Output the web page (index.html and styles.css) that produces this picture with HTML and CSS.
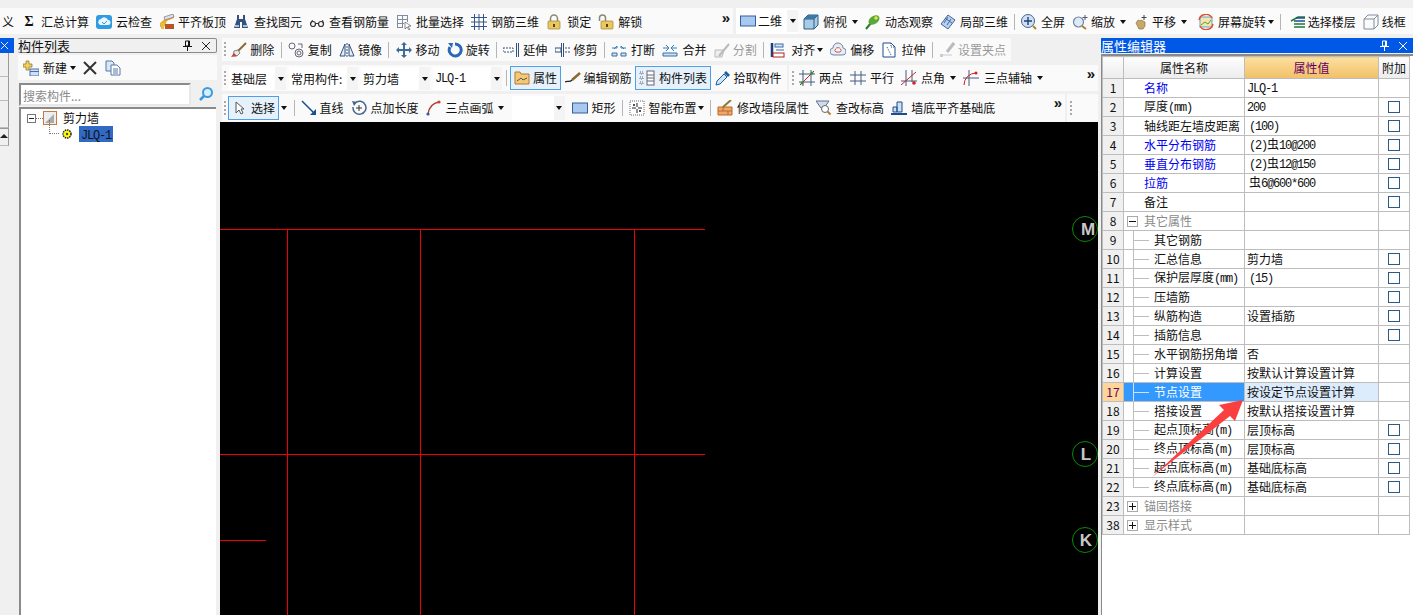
FILE: index.html
```html
<!DOCTYPE html>
<html lang="zh-CN">
<head>
  <meta charset="UTF-8">
  <title>属性编辑器</title>
  <link rel="stylesheet" href="styles.css">
</head>
<body>
  <div class="topbar">
    <div class="tb top-a">
      <span class="cut">义</span>
      <span class="it"><span class="sigma">Σ</span>汇总计算</span>
      <span class="it"><svg viewBox="0 0 16 16"><rect x="0" y="1" width="16" height="14" rx="3" fill="#2f9be0"/><path d="M3 10a3 3 0 0 1 2-5 4 4 0 0 1 7 1 2.500 2.500 0 0 1 0 5H4z" fill="#e8f5ff"/><path d="M6 8l2 2 3-3" stroke="#2f9be0" fill="none"/></svg>云检查</span>
      <span class="it g3"><svg viewBox="0 0 16 16"><path d="M1 9l6-5 8-3v3l-7 3-3 6H1z" fill="#e8b030"/><path d="M5 3l9-3 1 3-9 3z" fill="#dde" stroke="#667" stroke-width=".6"/><rect x="6" y="10" width="9" height="5" fill="#b5562a"/><path d="M2 15V9h3v6z" fill="#e8c040"/></svg>平齐板顶</span>
      <span class="it g5"><svg viewBox="0 0 16 16"><path d="M4 1h2v4h4V1h2v4l3 9H9V8H7v6H1l3-9z" fill="#33507f"/><path d="M2 11h4v2H2zM10 11h4v2h-4z" fill="#a8c0e0"/></svg>查找图元</span>
      <span class="it"><svg viewBox="0 0 16 16"><circle cx="4" cy="10" r="2.500" fill="none" stroke="#333" stroke-width="1.200"/><circle cx="12" cy="10" r="2.500" fill="none" stroke="#333" stroke-width="1.200"/><path d="M6.500 9.500h3M1.500 10l2-4M14.500 10l-1-4" stroke="#333" fill="none"/></svg>查看钢筋量</span>
      <span class="it"><svg viewBox="0 0 16 16"><path d="M1 1.500h11M1 5.500h11M1 9.500h7M1 13.500h6M1.500 1v13M6.500 1v13M11.500 1v7" stroke="#7d8ca0" fill="none"/><path d="M9 8l6 4-3 .5 2 3-1 .5-2-3-2 2z" fill="#fff" stroke="#444" stroke-width=".6"/></svg>批量选择</span>
      <span class="it"><svg viewBox="0 0 16 16"><path d="M0 3.500h16M0 8h16M0 12.500h16M3.500 0v16M8 0v16M12.500 0v16" stroke="#34568c" fill="none"/></svg>钢筋三维</span>
      <span class="it g5"><svg viewBox="0 0 16 16"><path d="M4.500 8V4.500a3.500 3.500 0 0 1 7 0V8" fill="none" stroke="#8a8a70" stroke-width="1.500"/><rect x="2" y="7" width="12" height="8" rx="1" fill="#e8c860" stroke="#a08030" stroke-width=".7"/><rect x="7" y="10" width="2" height="3" fill="#604010"/></svg>锁定</span>
      <span class="it"><svg viewBox="0 0 16 16"><path d="M1.500 7V4a3 3 0 0 1 6 0v3" fill="none" stroke="#8a8a70" stroke-width="1.500"/><rect x="3" y="7" width="12" height="8" rx="1" fill="#e8c860" stroke="#a08030" stroke-width=".7"/><rect x="8" y="10" width="2" height="3" fill="#604010"/></svg>解锁</span>
      <span class="more">»</span>
    </div>
    <div class="tb top-b">
      <span class="combo-btn"><span class="it g2"><svg viewBox="0 0 16 16"><rect x=".5" y="3" width="15" height="10" fill="#a9c8f0" stroke="#3060a0"/></svg>二维</span><span class="arr-box"><i class="arr"></i></span></span>
      <span class="it"><svg viewBox="0 0 16 16"><path d="M1 5l4-4h10v10l-4 4H1z" fill="#a8cce8" stroke="#2c5a80"/><path d="M1 5h10v10M11 5l4-4" stroke="#2c5a80" fill="none"/><path d="M1 5l4-4h10l-4 4z" fill="#3a78a8"/></svg>俯视</span><i class="arr arr-f"></i>
      <span class="it"><svg viewBox="0 0 16 16"><path d="M1 15L6 9" stroke="#2a7a2a" stroke-width="2"/><ellipse cx="9" cy="6" rx="6" ry="4" transform="rotate(-35 9 6)" fill="#5aa838"/><circle cx="11" cy="4" r="1.800" fill="#d8e850"/></svg>动态观察</span>
      <span class="it"><svg viewBox="0 0 16 16"><path d="M8 1l7 5-7 9-7-5z" fill="#b8d0ee" stroke="#406a9c"/><path d="M5 4l7 5M8 3L4 9M11 5l-4 6" stroke="#406a9c" fill="none"/></svg>局部三维</span>
      <i class="sep"></i>
      <span class="it"><svg viewBox="0 0 16 16"><circle cx="7" cy="7" r="6.500" fill="#cfe0f2" stroke="#44678f"/><path d="M7 3v8M3 7h8" stroke="#1c3f7a" stroke-width="1.400"/><path d="M12 12l3 3" stroke="#b08030" stroke-width="2"/></svg>全屏</span>
      <span class="it g3"><svg viewBox="0 0 16 16"><circle cx="6.500" cy="8" r="5" fill="#dfeaf6" stroke="#6d87a5" stroke-width="1.200"/><path d="M10 12l4 3" stroke="#b08030" stroke-width="2"/><path d="M13 1v5M10.500 3.500h5" stroke="#557" /></svg>缩放</span><i class="arr arr-f"></i>
      <span class="it g3"><svg viewBox="0 0 16 16"><path d="M3 9l2-3 2 1 1-1 2 1 2 1v4l-2 3H6z" fill="#c9a968" stroke="#7d6230" stroke-width=".6"/><path d="M11 1v5M8.500 3.500h5" stroke="#444"/></svg>平移</span><i class="arr arr-f"></i>
      <span class="it push4"><svg viewBox="0 0 16 16"><rect x="2" y="3" width="12" height="10" fill="#f2e6a8" stroke="#6aa0cc"/><path d="M3 11l4-3 3 2 3-4" stroke="#50a050" fill="none"/><path d="M1 6a7 7 0 0 1 13-2M15 10a7 7 0 0 1-13 2" stroke="#e04a30" stroke-width="1.400" fill="none"/></svg>屏幕旋转</span><i class="arr arr-n"></i>
      <i class="sep"></i>
      <span class="it g2 push3"><svg viewBox="0 0 16 16"><path d="M1 7l7-4h7M4 10h11M4 13h11" stroke="#1f7a3c" stroke-width="1.600" fill="none"/><path d="M6 4h9M4 7h11" stroke="#1d4d8e" stroke-width="1.400"/></svg>选择楼层</span>
      <span class="it g3"><svg viewBox="0 0 16 16"><path d="M1 5l4-4h10v10l-4 4H1zM1 5h10v10M11 5l4-4" stroke="#7d8ea0" fill="none"/></svg>线框</span>
    </div>
  </div>

  <div class="main">
    <div class="strip">
      <div class="strip-title"><svg viewBox="0 0 10 10"><path d="M1 1l8 8M9 1L1 9" stroke="#fff"/></svg></div>
      <div class="strip-cell"></div>
      <div class="strip-cell"></div>
      <div class="strip-cell tall"></div>
      <div class="strip-cell up"><i></i></div>
    </div>

    <div class="list">
      <div class="pane-title">
        <span>构件列表</span>
        <svg class="pin" viewBox="0 0 9 11"><path d="M2.500 1h4v5h-4zM0 6.500h9M4.500 7v4" fill="none" stroke="#111"/><path d="M5 1h1.500v5H5z" fill="#111"/></svg>
        <svg class="close" viewBox="0 0 10 10"><path d="M1 1l8 8M9 1L1 9" stroke="#222"/></svg>
      </div>
      <div class="list-tools">
        <span class="it"><svg viewBox="0 0 16 16"><path d="M3 1h3v3h3v3H6v3H3V7H0V4h3z" fill="#f0d060" stroke="#8a7020" stroke-width=".7"/><rect x="7" y="9" width="9" height="7" fill="#cfe0f4" stroke="#4a70a8"/><path d="M7 11.500h9" stroke="#4a70a8"/></svg>新建</span><i class="arr arr-n"></i>
        <svg class="tool-x" viewBox="0 0 14 14"><path d="M1 1l12 12M13 1L1 13" stroke="#333" stroke-width="2"/></svg>
        <svg class="tool-copy" viewBox="0 0 16 16"><path d="M1 1h6l2 2v8H1z" fill="#d8e6f6" stroke="#5578a8"/><path d="M6 5h6l3 3v7H6z" fill="#fff" stroke="#5578a8"/><path d="M8 9h5M8 11h5M8 13h5" stroke="#5578a8"/></svg>
      </div>
      <div class="search">
        <div class="search-input">搜索构件...</div>
        <svg viewBox="0 0 16 16"><circle cx="9.500" cy="6.500" r="4.500" fill="#d8eefc" stroke="#3b9be0" stroke-width="2"/><path d="M6 10l-4 4" stroke="#3b9be0" stroke-width="2.500"/></svg>
      </div>
      <div class="tree">
        <div class="node">
          <span class="expander"></span><i class="dots"></i>
          <svg viewBox="0 0 14 14"><rect x=".5" y=".5" width="13" height="13" fill="#eee" stroke="#c87a40"/><path d="M2 12l9-9v9z" fill="#aaa"/></svg>
          <span>剪力墙</span>
        </div>
        <div class="node child">
          <i class="elbow"></i>
          <svg viewBox="0 0 10 10"><circle cx="5" cy="5" r="4" fill="#ff0" stroke="#222" stroke-dasharray="1.500 .8" stroke-width="1.500"/><circle cx="5" cy="5" r="1.200" fill="#444"/></svg>
          <span class="picked"><span class="en">JLQ-1</span></span>
        </div>
      </div>
    </div>

    <div class="center">
      <div class="tb row1">
        <i class="grip"></i>
        <span class="it g3"><svg viewBox="0 0 16 16"><path d="M15 1L7 9" stroke="#8a6a30" stroke-width="2"/><path d="M2 14l1-5 4-1 2 3-3 3z" fill="#e8e8e8" stroke="#555" stroke-width=".7"/><path d="M0 15l6-1-3-3z" fill="#d04040"/></svg>删除</span>
        <i class="sep"></i>
        <span class="it"><svg viewBox="0 0 16 16"><circle cx="4" cy="4" r="3" fill="none" stroke="#667"/><circle cx="11" cy="11" r="4" fill="none" stroke="#667"/><circle cx="11" cy="11" r="2" fill="none" stroke="#667"/><path d="M10 2l4 0 0 4" stroke="#667" fill="none"/></svg>复制</span>
        <span class="it g3"><svg viewBox="0 0 16 16"><path d="M6 2L1 14h5zM10 2l5 12h-5z" fill="#e4edf7" stroke="#31507f"/><path d="M8 1v14" stroke="#31507f" stroke-dasharray="2 1"/></svg>镜像</span>
        <i class="sep"></i>
        <span class="it"><svg viewBox="0 0 16 16"><path d="M8 0l3 3H9v4h4V5l3 3-3 3V9H9v4h2l-3 3-3-3h2V9H3v2L0 8l3-3v2h4V3H5z" fill="#3e6a9c"/></svg>移动</span>
        <span class="it g3"><svg viewBox="0 0 16 16"><path d="M8 2a6 6 0 1 1-5 3" fill="none" stroke="#2868b8" stroke-width="3"/><path d="M1 1l5 0-1 5z" fill="#2868b8"/></svg>旋转</span>
        <i class="sep"></i>
        <span class="it"><svg viewBox="0 0 16 16"><path d="M13.500 1v14M15.500 1v14" stroke="#33507f"/><path d="M0 6h10v4H0z" fill="#fff" stroke="#33507f" stroke-dasharray="2 1"/></svg>延伸</span>
        <span class="it g3"><svg viewBox="0 0 16 16"><path d="M6.500 1v14M8.500 1v14" stroke="#33507f"/><path d="M0 6h6v4H0z" fill="none" stroke="#33507f"/><path d="M10 6h6M10 10h6" stroke="#33507f" stroke-dasharray="2 1"/></svg>修剪</span>
        <i class="sep"></i>
        <span class="it"><svg viewBox="0 0 16 16"><path d="M1 11h5v3H1zM10 11h5v3h-5z" fill="#cfe0f2" stroke="#3b6ea5"/><path d="M3 7l3-3v2h0M13 7l-3-3v2M1 6h5M10 6h5" stroke="#2f7fc0" fill="none"/></svg>打断</span>
        <span class="it"><svg viewBox="0 0 16 16"><path d="M1 11h14v3H1z" fill="#cfe0f2" stroke="#3b6ea5"/><path d="M1 6h5M10 6h5M4 3l3 3-3 3M12 3L9 6l3 3" stroke="#2f7fc0" fill="none"/></svg>合并</span>
        <span class="it g3 off"><svg viewBox="0 0 16 16"><path d="M1 8h9l-2 7H1z" fill="#eee" stroke="#bbb"/><path d="M5 14L15 2" stroke="#bbb" stroke-width="2"/></svg>分割</span>
        <i class="sep"></i>
        <span class="it g5"><svg viewBox="0 0 16 16"><path d="M2 1v14" stroke="#1c3f7a" stroke-width="2.500"/><rect x="5" y="2" width="8" height="3" fill="#d8e6f6" stroke="#3b6ea5"/><rect x="3" y="11" width="11" height="4" fill="#fff" stroke="#b02020"/><path d="M6 8h8" stroke="#3b6ea5"/></svg>对齐</span><i class="arr arr-n"></i>
        <span class="it"><svg viewBox="0 0 16 16"><path d="M4 13a3.500 3.500 0 0 1-1-7 5 5 0 0 1 10 0 3.500 3.500 0 0 1-1 7z" fill="#e8edf4" stroke="#6d87a5"/><path d="M6 10a2 2 0 0 1-.5-3 3 3 0 0 1 5 0 2 2 0 0 1-.5 3z" fill="#fff" stroke="#d05050"/></svg>偏移</span>
        <span class="it"><svg viewBox="0 0 16 16"><path d="M2 1h8l4 4v10H2z" fill="#fff" stroke="#1d4d8e"/><path d="M10 1v4h4M6 5l4 8" stroke="#1d4d8e" stroke-dasharray="1 1" fill="none"/></svg>拉伸</span>
        <i class="sep"></i>
        <span class="it g3 off"><svg viewBox="0 0 16 16"><path d="M15 1L8 10" stroke="#bbb" stroke-width="3"/><path d="M1 13h12" stroke="#ccc"/><rect x="1" y="12" width="3" height="3" fill="#ccc"/></svg>设置夹点</span>
      </div>

      <div class="row2">
        <div class="tb row2-a">
          <i class="grip"></i>
          <div class="combos">
            <span class="combo c-a"><span>基础层</span><span class="arr-box"><i class="arr"></i></span></span>
            <span class="combo c-b"><span class="clip">常用构件:</span><span class="arr-box"><i class="arr"></i></span></span>
            <span class="combo c-b"><span>剪力墙</span><span class="arr-box"><i class="arr"></i></span></span>
            <span class="combo c-b"><span class="en">JLQ-1</span><span class="arr-box"><i class="arr"></i></span></span>
          </div>
          <i class="sep sep-tight"></i>
          <div class="btns">
            <span class="it g3 active"><svg viewBox="0 0 16 16"><path d="M1 2h5l1 2h8v10H1z" fill="#f5c878" stroke="#b07a30"/><path d="M3 11l4-3 2 2 4-2" stroke="#555" fill="none"/></svg>属性</span>
            <span class="it g3"><svg viewBox="0 0 16 16"><path d="M15 3L7 10" stroke="#8a6a30" stroke-width="2.500"/><path d="M0 12c3-2 4 1 7-2" stroke="#222" fill="none" stroke-width="1.200"/></svg>编辑钢筋</span>
            <span class="it active"><svg viewBox="0 0 16 16"><path d="M1 2h3v2H1zM1 7h3v2H1zM1 12h3v2H1z" fill="none" stroke="#667" stroke-dasharray="1 1"/><rect x="8" y="1" width="7" height="14" fill="#fff" stroke="#667"/><path d="M8 5h7M8 8h7M8 11h7" stroke="#667"/></svg>构件列表</span>
            <span class="it g3"><svg viewBox="0 0 16 16"><path d="M1 15l1-4 7-7 3 3-7 7z" fill="#cfe6f8" stroke="#1d5e9e"/><path d="M9 3l2-2 4 4-2 2z" fill="#1d5e9e"/></svg>拾取构件</span>
          </div>
        </div>
        <div class="tb row2-b">
          <i class="grip"></i>
          <span class="it"><svg viewBox="0 0 16 16"><path d="M4 0v16M12 0v16M0 4h16M0 12h16" stroke="#445d80"/><path d="M1 15L15 1" stroke="#d02020"/><circle cx="3" cy="13" r="1.500" fill="#2a9a2a"/><circle cx="13" cy="3" r="1.500" fill="#2a9a2a"/></svg>两点</span>
          <span class="it"><svg viewBox="0 0 16 16"><path d="M5 1v14M11 1v14" stroke="#445d80"/><path d="M0 5h16M0 11h16" stroke="#445d80"/></svg>平行</span>
          <span class="it"><svg viewBox="0 0 16 16"><path d="M5 0v16M11 0v12M0 11h16" stroke="#445d80"/><path d="M0 15L15 2" stroke="#d02020"/><circle cx="13" cy="13" r="1.800" fill="#d02020"/></svg>点角</span><i class="arr arr-f"></i>
          <span class="it g5"><svg viewBox="0 0 16 16"><path d="M6 0v16M0 8h16" stroke="#445d80"/><path d="M1 15a12 12 0 0 1 12-12" stroke="#d02020" fill="none"/><circle cx="13" cy="3" r="1.500" fill="#d02020"/></svg>三点辅轴</span><i class="arr arr-f"></i>
          <span class="more">»</span>
        </div>
      </div>

      <div class="row3">
        <div class="tb row3-a">
          <i class="grip"></i>
          <span class="it g3 active"><svg viewBox="0 0 16 16"><path d="M4 2v11l3-3 2 4 2-1-2-4h3z" fill="#fff" stroke="#555"/></svg>选择</span><i class="arr arr-n"></i>
          <i class="sep sep-r"></i>
          <span class="it g3"><svg viewBox="0 0 16 16"><path d="M1 1l12 12" stroke="#1d4d8e" stroke-width="1.500"/><path d="M15 15H9l6-6z" fill="#1d4d8e"/></svg>直线</span>
          <span class="it"><svg viewBox="0 0 16 16"><path d="M4 3a6.500 6.500 0 1 1-2 4" fill="none" stroke="#44678f" stroke-width="1.500"/><path d="M1 1l5 1-3 4z" fill="#44678f"/><path d="M8 5v6M5 8h6" stroke="#333"/></svg>点加长度</span>
          <span class="it"><svg viewBox="0 0 16 16"><path d="M2 14C3 7 7 3 13 2" stroke="#b04030" stroke-width="1.400" fill="none"/><circle cx="2" cy="14" r="1.600" fill="#3060a0"/><circle cx="13" cy="2" r="1.600" fill="#d04030"/></svg>三点画弧</span><i class="arr arr-f"></i>
          <span class="combo c-c"><span></span><span class="arr-box"><i class="arr"></i></span></span>
          <span class="it"><svg viewBox="0 0 16 16"><rect x=".5" y="3" width="15" height="10" fill="#a9c8f0" stroke="#3060a0"/></svg>矩形</span>
          <i class="sep"></i>
          <span class="it"><svg viewBox="0 0 16 16"><rect x="1" y="1" width="14" height="14" fill="#fff" stroke="#667" stroke-dasharray="1 1"/><path d="M8 3v4M8 9v4M3 8h4M9 8h4" stroke="#222"/><rect x="4" y="4" width="2" height="2" fill="#456"/><rect x="10" y="10" width="2" height="2" fill="#456"/></svg>智能布置</span><i class="arr arr-n"></i>
          <i class="sep"></i>
          <span class="it"><svg viewBox="0 0 16 16"><path d="M1 7h14v8H1z" fill="#f0a868" stroke="#b8682a"/><path d="M1 11h14M6 7v4M11 11v4" stroke="#b8682a"/><path d="M14 0L6 7" stroke="#8a7a30" stroke-width="2"/></svg>修改墙段属性</span>
          <span class="it"><svg viewBox="0 0 16 16"><path d="M0 1h13L8 8H5z" fill="#d0dcea" stroke="#5a7090"/><circle cx="9" cy="9" r="3.500" fill="#fff" stroke="#667"/><path d="M11.500 11.500l3 3" stroke="#b08030" stroke-width="2"/></svg>查改标高</span>
          <span class="it"><svg viewBox="0 0 16 16"><path d="M6 2h5v10H6zM2 7h4v5H2z" fill="#cfe0f2" stroke="#1d4d8e"/><path d="M0 13h16v2H0z" fill="#1d4d8e"/></svg>墙底平齐基础底</span>
          <span class="more">»</span>
        </div>
        <div class="tb row3-b"><i class="grip"></i></div>
      </div>

      <div class="canvas">
        <svg class="drawing" viewBox="0 0 878 493">
          <g stroke="#f00000" fill="none">
            <path d="M0 107.500h485M0 332.500h485M0 418.500h46"/>
            <path d="M67.500 107.500V493M200.500 107.500V493M414.500 107.500V493"/>
          </g>
          <g fill="none" stroke="#0a8a0a">
            <circle cx="865" cy="107" r="12.500"/>
            <circle cx="865" cy="332" r="12.500"/>
            <circle cx="865" cy="418" r="12.500"/>
          </g>
          <g class="axis" text-anchor="middle">
            <text x="868" y="113">M</text>
            <text x="866" y="338">L</text>
            <text x="866" y="424">K</text>
          </g>
        </svg>
      </div>
    </div>

    <div class="props">
      <div class="pane-title blue">
        <span>属性编辑器</span>
        <svg class="pin" viewBox="0 0 9 11"><path d="M2.500 1h4v5h-4zM0 6.500h9M4.500 7v4" fill="none" stroke="#fff"/><path d="M5 1h1.500v5H5z" fill="#fff"/></svg>
        <svg class="close" viewBox="0 0 10 10"><path d="M1 1l8 8M9 1L1 9" stroke="#fff"/></svg>
      </div>
      <div class="props-body">
        <table class="grid">
          <colgroup><col class="c1"><col class="c2"><col class="c3"><col class="c4"></colgroup>
          <thead>
            <tr><th></th><th>属性名称</th><th class="val">属性值</th><th>附加</th></tr>
          </thead>
          <tbody>
            <tr><td class="no">1</td><td class="nm link">名称</td><td class="v"><span class="en">JLQ-1</span></td><td></td></tr>
            <tr><td class="no">2</td><td class="nm">厚度<span class="en">(mm)</span></td><td class="v"><span class="en">200</span></td><td><i class="cb"></i></td></tr>
            <tr><td class="no">3</td><td class="nm">轴线距左墙皮距离</td><td class="v in"><span class="en">(100)</span></td><td><i class="cb"></i></td></tr>
            <tr><td class="no">4</td><td class="nm link">水平分布钢筋</td><td class="v in"><span class="en">(2)</span>虫<span class="en">10@200</span></td><td><i class="cb"></i></td></tr>
            <tr><td class="no">5</td><td class="nm link">垂直分布钢筋</td><td class="v in"><span class="en">(2)</span>虫<span class="en">12@150</span></td><td><i class="cb"></i></td></tr>
            <tr><td class="no">6</td><td class="nm link">拉筋</td><td class="v in">虫<span class="en">6@600*600</span></td><td><i class="cb"></i></td></tr>
            <tr><td class="no">7</td><td class="nm">备注</td><td class="v"></td><td><i class="cb"></i></td></tr>
            <tr><td class="no">8</td><td class="group"><i class="box minus"></i>其它属性</td><td class="v"></td><td></td></tr>
            <tr><td class="no">9</td><td class="sub">其它钢筋</td><td class="v"></td><td></td></tr>
            <tr><td class="no">10</td><td class="sub">汇总信息</td><td class="v">剪力墙</td><td><i class="cb"></i></td></tr>
            <tr><td class="no">11</td><td class="sub">保护层厚度<span class="en">(mm)</span></td><td class="v in"><span class="en">(15)</span></td><td><i class="cb"></i></td></tr>
            <tr><td class="no">12</td><td class="sub">压墙筋</td><td class="v"></td><td><i class="cb"></i></td></tr>
            <tr><td class="no">13</td><td class="sub">纵筋构造</td><td class="v">设置插筋</td><td><i class="cb"></i></td></tr>
            <tr><td class="no">14</td><td class="sub">插筋信息</td><td class="v"></td><td><i class="cb"></i></td></tr>
            <tr><td class="no">15</td><td class="sub">水平钢筋拐角增</td><td class="v">否</td><td></td></tr>
            <tr><td class="no">16</td><td class="sub">计算设置</td><td class="v">按默认计算设置计算</td><td></td></tr>
            <tr class="cur"><td class="no">17</td><td class="sub">节点设置</td><td class="v">按设定节点设置计算</td><td></td></tr>
            <tr><td class="no">18</td><td class="sub">搭接设置</td><td class="v">按默认搭接设置计算</td><td></td></tr>
            <tr><td class="no">19</td><td class="sub">起点顶标高<span class="en">(m)</span></td><td class="v">层顶标高</td><td><i class="cb"></i></td></tr>
            <tr><td class="no">20</td><td class="sub">终点顶标高<span class="en">(m)</span></td><td class="v">层顶标高</td><td><i class="cb"></i></td></tr>
            <tr><td class="no">21</td><td class="sub">起点底标高<span class="en">(m)</span></td><td class="v">基础底标高</td><td><i class="cb"></i></td></tr>
            <tr><td class="no">22</td><td class="sub end">终点底标高<span class="en">(m)</span></td><td class="v">基础底标高</td><td><i class="cb"></i></td></tr>
            <tr><td class="no">23</td><td class="group"><i class="box plus"></i>锚固搭接</td><td class="v"></td><td></td></tr>
            <tr><td class="no">38</td><td class="group"><i class="box plus"></i>显示样式</td><td class="v"></td><td></td></tr>
          </tbody>
        </table>
      </div>
      <!-- red annotation arrow over the table -->
      <svg class="mark" viewBox="0 0 92 78"><polygon points="91,0 83,21 78,16 0,77 72,10 67,5" fill="#fb3f3f"/></svg>
    </div>
  </div>
</body>
</html>
```

FILE: styles.css
```css
* {
  box-sizing: border-box;
}
html, body {
  height: 100%;
}
body {
  margin: 0;
  height: 615px;
  overflow: hidden;
  background: #f0f0f0;
  color: #111;
  font: 12px/16px "Noto Sans CJK SC", "Liberation Sans", sans-serif;
}
i {
  font-style: normal;
}
.en {
  font-family: "Liberation Mono", monospace;
  letter-spacing: -1.2px;
  white-space: pre;
}

/* toolbars */
.tb {
  display: flex;
  align-items: center;
  gap: 7px;
  background: #fafafa;
}
.it {
  display: flex;
  align-items: center;
  gap: 4px;
  white-space: nowrap;
}
.it svg {
  width: 16px;
  height: 16px;
  flex: none;
}
.g2 { gap: 2px; }
.g3 { gap: 3px; }
.g5 { gap: 5px; }
.push3 { margin-left: 3px; }
.push4 { margin-left: 4px; }
.off {
  color: #9a9a9a;
}
.sep {
  width: 1px;
  height: 16px;
  margin: 0 -1px;
  background: #b5b5b5;
  flex: none;
}
.sep-tight {
  margin: 0 1px;
}
.sep-r {
  margin-left: 0;
}
.grip {
  width: 2px;
  height: 15px;
  flex: none;
  background: repeating-linear-gradient(#aaa 0 2px, transparent 2px 4px);
}
.arr {
  display: inline-block;
  flex: none;
  width: 0;
  height: 0;
  border: 3.5px solid transparent;
  border-top: 4px solid #111;
  border-bottom: 0;
}
.arr-n {
  margin-left: -5.5px;
}
.arr-f {
  margin: 0 .5px 0 -2.5px;
}
.arr-box {
  display: flex;
  align-items: center;
  justify-content: center;
  width: 11px;
  align-self: stretch;
  background: #f4f4f4;
}
.more {
  margin-left: auto;
  padding-right: 3px;
  font: bold 15px/14px "Liberation Sans", sans-serif;
  align-self: flex-start;
  padding-top: 2px;
}
.active {
  padding: 3px;
  background: #e6f1fb;
  border: 1px solid #4d9fe8;
}

/* top bar */
.topbar {
  display: flex;
  gap: 3px;
  height: 26px;
  margin-top: 8px;
}
.top-a {
  width: 733px;
  flex: none;
  padding-top: 1px;
  overflow: hidden;
}
.cut {
  margin-left: 2px;
  white-space: nowrap;
}
.sigma {
  width: 16px;
  text-align: center;
  font: bold 14px/16px "Liberation Serif", serif;
}
.top-b {
  flex: 1;
  padding-top: 1px;
  background: #fbfbfb;
  overflow: hidden;
}
.combo-btn {
  display: flex;
  align-items: center;
  align-self: stretch;
  gap: 5px;
  margin: -1px -2px 0 0;
  padding: 2px 0 2px 4px;
  background: #fff;
}

/* panes */
.main {
  display: flex;
  height: 577px;
  margin-top: 4px;
}
.pane-title {
  display: flex;
  align-items: center;
  height: 15px;
  font-size: 13px;
  line-height: 14px;
  background: #f0f0f0;
  border: 1px solid #8a8a8a;
  border-left: 0;
  border-radius: 2px;
  white-space: nowrap;
}
.pin {
  margin-left: auto;
  width: 9px;
  height: 11px;
}
.close {
  width: 10px;
  height: 10px;
  margin: 0 5px 0 9px;
}
.strip {
  width: 18px;
  flex: none;
  padding-right: 4px;
}
.strip-title {
  display: flex;
  align-items: center;
  height: 15px;
  background: #0058e6;
}
.strip-title svg {
  width: 9px;
  height: 9px;
}
.strip-cell {
  height: 24px;
  margin-right: 5px;
  border-bottom: 1px solid #bbb;
  border-right: 1px solid #999;
}
.strip-cell.tall {
  height: 27px;
}
.strip-cell.up {
  height: 18px;
  border-top: 1px solid #999;
  padding-top: 5px;
}
.strip-cell.up i {
  display: block;
  width: 0;
  border: 4px solid transparent;
  border-bottom: 4px solid #222;
  border-top: 0;
}

.list {
  width: 199px;
  flex: none;
  display: flex;
  flex-direction: column;
}
.list-tools {
  display: flex;
  align-items: center;
  height: 25px;
  margin-top: 2px;
  padding-left: 5px;
  gap: 9px;
  background: #fafafa;
}
.list-tools .arr-n {
  margin-left: -6px;
}
.tool-x {
  width: 14px;
  height: 14px;
  margin-left: -2px;
}
.tool-copy {
  width: 16px;
  height: 16px;
  margin-left: -1px;
}
.search {
  display: flex;
  align-items: center;
  gap: 7px;
  height: 24px;
  margin-top: 2px;
  padding-left: 1px;
}
.search-input {
  width: 172px;
  height: 23px;
  padding: 2px;
  border: 2px solid #e8e8e8;
  border-top-color: #8a8a8a;
  border-left-color: #8a8a8a;
  background: #fff;
  color: #8a8a8a;
  line-height: 17px;
}
.search svg {
  width: 16px;
  height: 16px;
}
.tree {
  flex: 1;
  margin: 1px 1px 0 1px;
  padding-top: 1px;
  background: #fff;
  border-left: 2px solid #8a8a8a;
  border-top: 2px solid #8a8a8a;
}
.node {
  display: flex;
  align-items: center;
  height: 16px;
  padding-left: 6px;
  white-space: nowrap;
}
.node svg {
  width: 14px;
  height: 14px;
  margin-right: 6px;
}
.expander {
  width: 9px;
  height: 9px;
  border: 1px solid #777;
  background: linear-gradient(#222, #222) center / 5px 1px no-repeat;
}
.dots {
  width: 7px;
  border-top: 1px dotted #777;
}
.child {
  padding-left: 28px;
}
.child svg {
  width: 10px;
  height: 10px;
  margin-left: 3px;
  margin-right: 7px;
}
.elbow {
  width: 10px;
  height: 14px;
  margin-top: -14px;
  border-left: 1px dotted #777;
  border-bottom: 1px dotted #777;
}
.picked {
  width: 34px;
  height: 16px;
  padding-left: 2px;
  background: #316ac5;
}

/* drawing area */
.center {
  width: 878px;
  margin-left: 3px;
  flex: none;
  display: flex;
  flex-direction: column;
}
.row1 {
  width: 789px;
  height: 23px;
  margin-left: 2px;
  padding-left: 2px;
  gap: 7.25px;
}
.row1 > .grip {
  margin-right: -2px;
}
.row2, .row3 {
  display: flex;
  gap: 2px;
  margin-left: 2px;
}
.row2 {
  height: 26px;
  margin-top: 4px;
}
.row2-a {
  width: 565px;
  padding-left: 2px;
  gap: 3px;
}
.row2-b {
  flex: 1;
  padding-left: 3px;
}
.row2-b .grip {
  margin-right: -2px;
}
.combos {
  display: flex;
  gap: 3px;
  align-self: stretch;
  padding: 2px 0 1px;
}
.combo {
  display: flex;
  align-items: center;
  justify-content: space-between;
  padding-left: 2px;
  background: #fff;
  white-space: nowrap;
}
.c-a {
  width: 57px;
}
.c-b {
  width: 69px;
}
.c-c {
  width: 53px;
  align-self: stretch;
  margin: 2px 0;
}
.clip {
  width: 51px;
  overflow: hidden;
}
.btns {
  display: flex;
  align-items: center;
  gap: 3.5px;
  margin-left: -1px;
}
.row3 {
  height: 28px;
  margin-top: 3px;
}
.row3-a {
  width: 843px;
  padding-left: 2px;
}
.row3-a > .grip {
  margin-right: -5px;
}
.row3-b {
  flex: 1;
  padding-left: 3px;
}
.canvas {
  flex: 1;
  background: #000;
}
.drawing {
  display: block;
  width: 878px;
  height: 493px;
}
.axis {
  fill: #c8c8c8;
  font: bold 17px "Liberation Sans", sans-serif;
}

/* property editor */
.props {
  position: relative;
  flex: 1;
  margin-left: 3px;
  display: flex;
  flex-direction: column;
}
.blue {
  background: #0058e6;
  border: 0;
  border-radius: 0;
  color: #fff;
}
.props-body {
  flex: 1;
  margin-top: 1px;
  background: #fff;
  border-top: 2px solid #8a8a8a;
  border-left: 1px solid #8a8a8a;
}
.grid {
  width: 307px;
  table-layout: fixed;
  border-collapse: collapse;
}
.c1 { width: 21px; }
.c2 { width: 121px; }
.c3 { width: 134px; }
.c4 { width: 31px; }
.grid th, .grid td {
  height: 19px;
  padding: 0;
  border: 1px solid #bdbdbd;
  overflow: hidden;
  white-space: nowrap;
  font-weight: 400;
  line-height: 16px;
}
.grid th {
  height: 22px;
  background: linear-gradient(#fdfdfd, #ececec);
  text-align: center;
}
.grid th.val {
  background: linear-gradient(#fbdf9f, #f2c067);
  color: #660066;
}
.no {
  background: #f0f0f0;
  text-align: center;
}
.grid .nm {
  padding-left: 20px;
}
.link {
  color: #0000f0;
}
.grid .v {
  padding-left: 2px;
}
.grid .in {
  padding-left: 4px;
}
.grid .group {
  padding-left: 3px;
  color: #8a8a8a;
}
.box {
  display: inline-block;
  width: 11px;
  height: 11px;
  margin-right: 6px;
  vertical-align: -1px;
  border: 1px solid #aaa;
  background: linear-gradient(#111, #111) center / 7px 1px no-repeat;
}
.box.plus {
  background:
    linear-gradient(#111, #111) center / 7px 1px no-repeat,
    linear-gradient(#111, #111) center / 1px 7px no-repeat;
}
.grid .sub {
  padding-left: 30px;
  background:
    linear-gradient(#bdbdbd, #bdbdbd) 9px 0 / 1px 100% no-repeat,
    linear-gradient(#bdbdbd, #bdbdbd) 9px 50% / 16px 1px no-repeat;
}
.grid .sub.end {
  background:
    linear-gradient(#bdbdbd, #bdbdbd) 9px 0 / 1px 50% no-repeat,
    linear-gradient(#bdbdbd, #bdbdbd) 9px 50% / 16px 1px no-repeat;
}
.cb {
  display: block;
  width: 12px;
  height: 12px;
  margin: 0 auto;
  border: 1px solid #2b5a85;
  background: #fff;
}
.cur .no {
  background: #ffd699;
  color: #660066;
}
.grid .cur .sub {
  color: #fff;
  background:
    linear-gradient(#cfe4fa, #cfe4fa) 9px 0 / 1px 100% no-repeat,
    linear-gradient(#cfe4fa, #cfe4fa) 9px 50% / 16px 1px no-repeat,
    #3399ff;
}
.cur .v {
  background: #dcecfd;
}
.mark {
  position: absolute;
  left: 51px;
  top: 362px;
  width: 92px;
  height: 78px;
}
```
